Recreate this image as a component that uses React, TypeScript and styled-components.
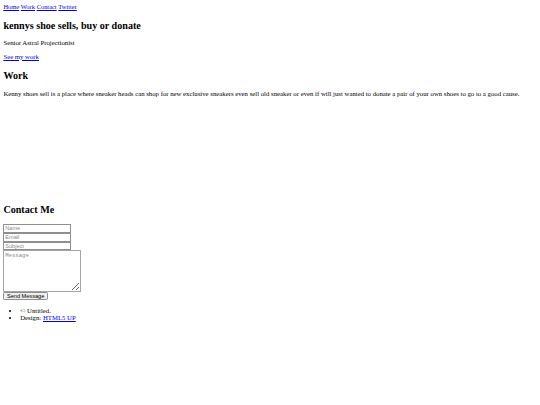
import React from "react";
import styled, { createGlobalStyle } from "styled-components";

const Global = createGlobalStyle`
  html, body { margin: 0; padding: 0; background: #fff; }
  body { font-family: "Liberation Serif", "Times New Roman", serif; color: #000; }
`;

const Page = styled.div`
  zoom: 0.421875;
  padding: 8px;
  font-size: 16px;
`;

const Link = styled.a<{ $small?: boolean }>`
  color: #0000ee;
  text-decoration: underline;
  font-size: ${(p) => (p.$small ? "15.3px" : "inherit")};
`;

const Nav = styled.nav`
  display: block;
`;

const Heading = styled.h1`
  font-size: 1.5em;
  margin: 22px 0 20px;
  font-weight: bold;
`;

const SubHeading = styled.h2<{ $top?: number }>`
  font-size: 1.5em;
  margin: ${(p) => p.$top ?? 20}px 0 20px;
  font-weight: bold;
`;

const Para = styled.p`
  margin: 1em 0;
`;

const Gallery = styled.div`
  height: 219px;
`;

const Form = styled.form`
  display: flex;
  flex-direction: column;
  align-items: flex-start;
`;

const Field = styled.input`
  font-family: "Liberation Sans", Arial, sans-serif;
  font-size: 13.333px;
  padding: 1px 2px;
  border: 2px solid #8f8f8f;
  border-radius: 0;
  width: 151px;
  margin: 0;
  &::placeholder { color: #8a8a8a; }
`;

const Area = styled.textarea`
  font-family: "Liberation Mono", monospace;
  font-size: 13.333px;
  padding: 2px;
  border: 2px solid #a5a5a5;
  width: 175px;
  height: 89px;
  margin: 0;
  &::placeholder { color: #8a8a8a; }
`;

const Button = styled.button`
  font-family: "Liberation Sans", Arial, sans-serif;
  font-size: 13.333px;
  margin: 0;
  padding: 1px 6px;
  border: 2px solid #8f8f8f;
  border-radius: 3px;
  background: #efefef;
  color: #000;
`;

const List = styled.ul`
  margin: 1em 0;
  padding-left: 40px;
`;

export default function App() {
  return (
    <>
      <Global />
      <Page>
        <Nav>
          <Link $small href="#">Home</Link> <Link $small href="#">Work</Link>{" "}
          <Link $small href="#">Contact</Link> <Link $small href="#">Twitter</Link>
        </Nav>
        <section>
          <Heading>kennys shoe sells, buy or donate</Heading>
          <Para>Senior Astral Projectionist</Para>
          <Link href="#">See my work </Link>
        </section>
        <section>
          <SubHeading $top={25}>Work</SubHeading>
          <Para>
            Kenny shoes sell is a place where sneaker heads can shop for new exclusive sneakers
            even sell old sneaker or even if will just wanted to donate a pair of your own shoes
            to go to a good cause.
          </Para>
          <Gallery />
        </section>
        <section>
          <SubHeading>Contact Me</SubHeading>
          <Form>
            <Field type="text" placeholder="Name" />
            <Field type="email" placeholder="Email" />
            <Field type="text" placeholder="Subject" />
            <Area placeholder="Message" />
            <Button type="button">Send Message</Button>
          </Form>
        </section>
        <footer>
          <List>
            <li>© Untitled.</li>
            <li>
              Design: <Link href="#">HTML5 UP</Link>
            </li>
          </List>
        </footer>
      </Page>
    </>
  );
}
